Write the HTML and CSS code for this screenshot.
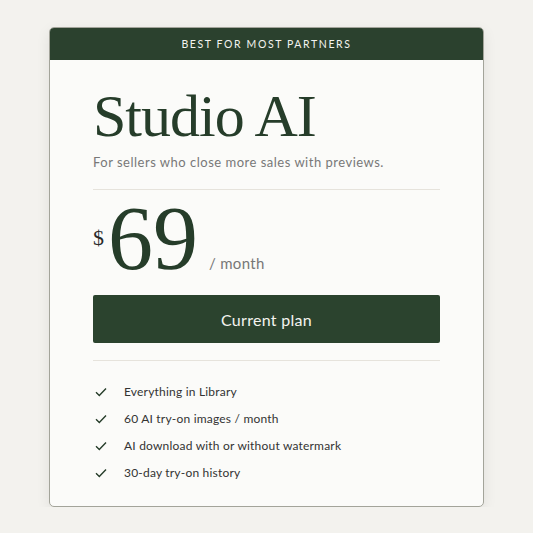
FILE: index.html
```html
<!DOCTYPE html>
<html lang="en">
<head>
    <meta charset="UTF-8">
    <meta name="viewport" content="width=device-width, initial-scale=1.0">
    <title>Studio AI plan</title>
    <link rel="stylesheet" href="styles.css">
</head>
<body>
    <div class="plan-card">
        <!-- Ribbon across the top of the card -->
        <div class="plan-ribbon">BEST FOR MOST PARTNERS</div>

        <div class="plan-body">
            <h1 class="plan-name">Studio AI</h1>
            <p class="plan-tagline">For sellers who close more sales with previews.</p>

            <hr class="rule">

            <div class="price">
                <span class="currency">$</span>
                <span class="amount">69</span>
                <span class="period">/ month</span>
            </div>

            <button class="plan-button">Current plan</button>

            <hr class="rule">

            <ul class="features">
                <li><svg class="check" viewBox="0 0 12 10"><path d="M1 5.2 L4.3 8.4 L11 1.4"/></svg>Everything in Library</li>
                <li><svg class="check" viewBox="0 0 12 10"><path d="M1 5.2 L4.3 8.4 L11 1.4"/></svg>60 AI try-on images / month</li>
                <li><svg class="check" viewBox="0 0 12 10"><path d="M1 5.2 L4.3 8.4 L11 1.4"/></svg>AI download with or without watermark</li>
                <li><svg class="check" viewBox="0 0 12 10"><path d="M1 5.2 L4.3 8.4 L11 1.4"/></svg>30-day try-on history</li>
            </ul>
        </div>
    </div>
</body>
</html>
```

FILE: styles.css
```css
/* Pricing card for the Studio AI plan */
* {
    box-sizing: border-box;
}

body {
    font-family: Lato, "Open Sans", sans-serif;
    background-color: #f3f2ee;
    margin: 0;
    padding: 27px 0 0;
}

.plan-card {
    width: 435px;
    margin: 0 0 0 49px;
    background-color: #fbfbf9;
    border: 1px solid #a3a49a;
    border-radius: 5px;
    overflow: hidden;
    box-shadow: 0 4px 14px rgba(0, 0, 0, 0.08);
}

.plan-ribbon {
    background-color: #2b412e;
    color: #f4f4ef;
    height: 32px;
    line-height: 32px;
    text-align: center;
    font-size: 10.5px;
    letter-spacing: 1.6px;
}

.plan-body {
    padding: 24px 43px 20px 43px;
}

.plan-name {
    font-family: "Liberation Serif", serif;
    font-weight: normal;
    font-size: 60px;
    letter-spacing: -1px;
    line-height: 64px;
    color: #263d2a;
    margin: 0;
}

.plan-tagline {
    font-size: 13px;
    color: #787878;
    margin: 6px 0 0;
    letter-spacing: 0.5px;
}

.rule {
    border: none;
    border-top: 1px solid #e6e3dc;
    margin: 19px 0 0;
}

.price {
    display: flex;
    align-items: baseline;
    margin-top: 5px;
    height: 86px;
}

.currency {
    font-family: "Liberation Serif", serif;
    font-size: 22px;
    color: #2a2a2a;
    align-self: center;
    margin-right: 4px;
}

.amount {
    font-family: "Liberation Serif", serif;
    font-size: 90px;
    color: #263d2a;
    line-height: 88px;
}

.period {
    font-size: 15px;
    color: #777;
    margin-left: 11px;
    letter-spacing: 0.3px;
}

.plan-button {
    display: block;
    width: 100%;
    height: 48px;
    margin-top: 14px;
    background-color: #2b432e;
    color: #f4f4ef;
    border: none;
    border-radius: 2px;
    font-family: Lato, "Open Sans", sans-serif;
    font-size: 16px;
    letter-spacing: 0.3px;
    cursor: pointer;
}

.plan-button + .rule {
    margin-top: 17px;
}

.features {
    list-style: none;
    margin: 17px 0 0;
    padding: 0;
}

.features li {
    display: flex;
    align-items: center;
    height: 27px;
    font-size: 12px;
    color: #333;
    letter-spacing: 0.2px;
}

.check {
    width: 12px;
    height: 10px;
    margin: 0 17px 0 2px;
    fill: none;
    stroke: #263d2a;
    stroke-width: 1.4;
}
```
